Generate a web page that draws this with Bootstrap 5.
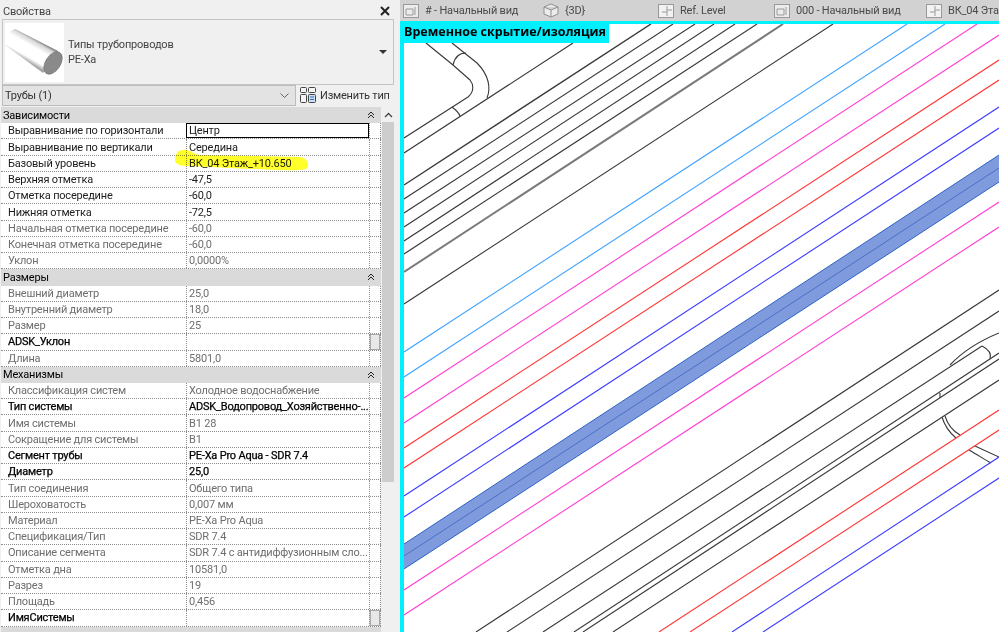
<!DOCTYPE html>
<html lang="ru">
<head>
  <meta charset="UTF-8" />
  <title>Свойства</title>
  <link rel="stylesheet" href="https://cdn.jsdelivr.net/npm/bootstrap@5.3.0/dist/css/bootstrap.min.css" />
  <style>
    html, body { height: 632px; overflow: hidden; }
    body { background: #f0f0f0; font-family: Roboto, "Liberation Sans", sans-serif; font-size: 11px; letter-spacing: -.2px; color: #000; line-height: 1; }

    /* левая панель */
    .props-panel { width: 398px; flex: none; height: 632px; overflow: hidden; padding-top: 3px; }
    .props-title { height: 16px; padding: 0 3px; color: #444; }
    .type-box { height: 66px; margin: 0 4px 0 2px; border: 1px solid #c4c4c4; padding: 2px; }
    .type-thumb { width: 59px; height: 59px; background: #fff; flex: none; }
    .type-text { color: #444; line-height: 15px; padding-left: 4px; }
    .filter-row { height: 22px; margin: 0 4px 0 2px; }
    .filter-combo { width: 294px; height: 21px; background: #e3e3e3; border: 1px solid #bcbcbc; padding: 0 2px; color: #333; flex: none; }
    .type-edit { color: #333; padding-left: 4px; gap: 4px; height: 20px; white-space: nowrap; }

    .props-wrap { height: 525px; padding-left: 1px; margin-right: 4px; }
    .props-grid { width: 380px; flex: none; background: #fff; }
    .group-row { height: 16.24px; background: #dadada; padding: 0 6px 0 2px; }
    .prop-row { height: 16.24px; border-bottom: 1px dotted #8c8c8c; }
    .prop-name { width: 185px; flex: none; padding-left: 7px; background: #fff; white-space: nowrap; color: #1c1c1c; }
    .prop-value { width: 183px; flex: none; padding-left: 2px; border-left: 1px dotted #8c8c8c; white-space: nowrap; overflow: hidden; color: #1c1c1c; }
    .prop-rest { flex: 1; border-left: 1px dotted #8c8c8c; border-right: 1px dotted #8c8c8c; }
    .prop-name, .prop-value { display: flex; align-items: center; height: 100%; }
    .prop-off .prop-name, .prop-off .prop-value { color: #6e6e6e; }
    .prop-strong .prop-name, .prop-strong .prop-value { color: #000; -webkit-text-stroke: .25px #000; }
    .prop-focus { outline: 1px solid #000; outline-offset: -1px; }
    .prop-thumb { background: #e8e8e8; box-shadow: inset 0 0 0 1px #a8a8a8; }

    .scroll-rail { width: 12px; flex: none; margin-left: 1px; }
    .scroll-head { height: 15px; }
    .scroll-handle { height: 360px; background: #cdcdcd; }

    .marker-layer { top: 0; left: 0; width: 398px; height: 180px; pointer-events: none; mix-blend-mode: multiply; }

    /* вид */
    .view-side { flex: 1; min-width: 0; padding-left: 2px; }
    .view-tabs { height: 21px; background: #d2d2d2; padding-left: 3px; color: #4a4a4a; white-space: nowrap; overflow: hidden; }
    .view-tab { flex: none; gap: 6px; }
    .view-tab:nth-child(1) { width: 140px; }
    .view-tab:nth-child(2) { width: 115px; }
    .view-tab:nth-child(3) { width: 116px; }
    .view-tab:nth-child(4) { width: 152px; }
    .view-canvas { height: 611px; border-top: 3px solid #00f0ff; border-left: 4px solid #00f0ff; background: #fff; }
    .view-canvas svg { display: block; }
    .isolate-label { top: 0; left: 0; background: #00f0ff; height: 19px; width: 205px; font-family: "Open Sans", sans-serif; font-weight: 700; font-size: 12.500px; letter-spacing: 0; color: #000; padding-bottom: 2px; white-space: nowrap; }
    .ln { fill: none; stroke-width: 1.100; }
    .ln-k { stroke: #383838; }
    .ln-b { stroke: #3ea2ff; }
    .ln-m { stroke: #ff3fd2; }
    .ln-r { stroke: #ff3535; }
    .ln-d { stroke: #3c3cff; }
  </style>
</head>
<body>

<div class="d-flex">
  <!-- Панель свойств -->
  <div class="props-panel position-relative">
    <div class="props-title d-flex justify-content-between align-items-center">
      <span>Свойства</span>
      <svg width="12" height="12" viewBox="0 0 12 12" class="me-1"><path d="M2 2l8 8M10 2l-8 8" stroke="#222" stroke-width="2" fill="none"/></svg>
    </div>

    <div class="type-box d-flex align-items-center">
      <div class="type-thumb">
        <svg width="59" height="59" viewBox="5 22 59 59">
          <defs>
            <linearGradient id="tube" gradientUnits="userSpaceOnUse" x1="36" y1="38" x2="24" y2="59">
              <stop offset="0" stop-color="#7c7c7c"/>
              <stop offset="0.12" stop-color="#d8d8d8"/>
              <stop offset="0.35" stop-color="#fff"/>
              <stop offset="0.8" stop-color="#fff"/>
              <stop offset="1" stop-color="#a4a4a4"/>
            </linearGradient>
          </defs>
          <path d="M15 28C9 30 3 37 5 44L43 72 58 50Z" fill="url(#tube)"/>
          <ellipse cx="53" cy="62" rx="7.500" ry="12.500" transform="rotate(33 53 62)" fill="#8a8a8a" stroke="#6c6c6c" stroke-width=".6"/>
        </svg>
      </div>
      <div class="type-text flex-grow-1">Типы трубопроводов<br />PE-Xa</div>
      <svg width="8" height="4" viewBox="0 0 8 4" class="me-1"><path d="M0 0h8L4 4z" fill="#333"/></svg>
    </div>

    <div class="filter-row d-flex align-items-start">
      <div class="filter-combo d-flex align-items-center justify-content-between">
        <span>Трубы (1)</span>
        <svg width="9" height="5" viewBox="0 0 9 5" class="me-1"><path d="M.5.5l4 4 4-4" stroke="#666" fill="none"/></svg>
      </div>
      <div class="type-edit d-flex align-items-center">
        <svg width="16" height="16" viewBox="0 0 16 16">
          <rect x=".5" y=".5" width="6" height="5" rx="1" fill="#f4f4f4" stroke="#444"/>
          <rect x="8.500" y=".5" width="7" height="5" rx="1" fill="#f4f4f4" stroke="#444"/>
          <rect x=".5" y="7.500" width="6" height="8" rx="1" fill="#f4f4f4" stroke="#444"/>
          <rect x="8.500" y="7.500" width="7" height="8" rx="1" fill="#cfe0f2" stroke="#444"/>
          <path d="M10 10h4M10 12.500h4" stroke="#2b6fb5"/>
        </svg>
        <span>Изменить тип</span>
      </div>
    </div>

    <div class="props-wrap d-flex">
      <div class="props-grid">
        <div class="group-row d-flex align-items-center justify-content-between"><span>Зависимости</span><svg width="8" height="8" viewBox="0 0 8 8"><path d="M1 4l3-3 3 3M1 7l3-3 3 3" stroke="#222" fill="none"/></svg></div>
        <div class="prop-row d-flex"><div class="prop-name">Выравнивание по горизонтали</div><div class="prop-value prop-focus">Центр</div><div class="prop-rest"></div></div>
        <div class="prop-row d-flex"><div class="prop-name">Выравнивание по вертикали</div><div class="prop-value">Середина</div><div class="prop-rest"></div></div>
        <div class="prop-row d-flex"><div class="prop-name">Базовый уровень</div><div class="prop-value">ВК_04 Этаж_+10.650</div><div class="prop-rest"></div></div>
        <div class="prop-row d-flex"><div class="prop-name">Верхняя отметка</div><div class="prop-value">-47,5</div><div class="prop-rest"></div></div>
        <div class="prop-row d-flex"><div class="prop-name">Отметка посередине</div><div class="prop-value">-60,0</div><div class="prop-rest"></div></div>
        <div class="prop-row d-flex"><div class="prop-name">Нижняя отметка</div><div class="prop-value">-72,5</div><div class="prop-rest"></div></div>
        <div class="prop-row prop-off d-flex"><div class="prop-name">Начальная отметка посередине</div><div class="prop-value">-60,0</div><div class="prop-rest"></div></div>
        <div class="prop-row prop-off d-flex"><div class="prop-name">Конечная отметка посередине</div><div class="prop-value">-60,0</div><div class="prop-rest"></div></div>
        <div class="prop-row prop-off d-flex"><div class="prop-name">Уклон</div><div class="prop-value">0,0000%</div><div class="prop-rest"></div></div>

        <div class="group-row d-flex align-items-center justify-content-between"><span>Размеры</span><svg width="8" height="8" viewBox="0 0 8 8"><path d="M1 4l3-3 3 3M1 7l3-3 3 3" stroke="#222" fill="none"/></svg></div>
        <div class="prop-row prop-off d-flex"><div class="prop-name">Внешний диаметр</div><div class="prop-value">25,0</div><div class="prop-rest"></div></div>
        <div class="prop-row prop-off d-flex"><div class="prop-name">Внутренний диаметр</div><div class="prop-value">18,0</div><div class="prop-rest"></div></div>
        <div class="prop-row prop-off d-flex"><div class="prop-name">Размер</div><div class="prop-value">25</div><div class="prop-rest"></div></div>
        <div class="prop-row prop-strong d-flex"><div class="prop-name">ADSK_Уклон</div><div class="prop-value"></div><div class="prop-rest prop-thumb"></div></div>
        <div class="prop-row prop-off d-flex"><div class="prop-name">Длина</div><div class="prop-value">5801,0</div><div class="prop-rest"></div></div>

        <div class="group-row d-flex align-items-center justify-content-between"><span>Механизмы</span><svg width="8" height="8" viewBox="0 0 8 8"><path d="M1 4l3-3 3 3M1 7l3-3 3 3" stroke="#222" fill="none"/></svg></div>
        <div class="prop-row prop-off d-flex"><div class="prop-name">Классификация систем</div><div class="prop-value">Холодное водоснабжение</div><div class="prop-rest"></div></div>
        <div class="prop-row prop-strong d-flex"><div class="prop-name">Тип системы</div><div class="prop-value">ADSK_Водопровод_Хозяйственно-...</div><div class="prop-rest"></div></div>
        <div class="prop-row prop-off d-flex"><div class="prop-name">Имя системы</div><div class="prop-value">В1 28</div><div class="prop-rest"></div></div>
        <div class="prop-row prop-off d-flex"><div class="prop-name">Сокращение для системы</div><div class="prop-value">В1</div><div class="prop-rest"></div></div>
        <div class="prop-row prop-strong d-flex"><div class="prop-name">Сегмент трубы</div><div class="prop-value">PE-Xa Pro Aqua - SDR 7.4</div><div class="prop-rest"></div></div>
        <div class="prop-row prop-strong d-flex"><div class="prop-name">Диаметр</div><div class="prop-value">25,0</div><div class="prop-rest"></div></div>
        <div class="prop-row prop-off d-flex"><div class="prop-name">Тип соединения</div><div class="prop-value">Общего типа</div><div class="prop-rest"></div></div>
        <div class="prop-row prop-off d-flex"><div class="prop-name">Шероховатость</div><div class="prop-value">0,007 мм</div><div class="prop-rest"></div></div>
        <div class="prop-row prop-off d-flex"><div class="prop-name">Материал</div><div class="prop-value">PE-Xa Pro Aqua</div><div class="prop-rest"></div></div>
        <div class="prop-row prop-off d-flex"><div class="prop-name">Спецификация/Тип</div><div class="prop-value">SDR 7.4</div><div class="prop-rest"></div></div>
        <div class="prop-row prop-off d-flex"><div class="prop-name">Описание сегмента</div><div class="prop-value">SDR 7.4 с антидиффузионным сло...</div><div class="prop-rest"></div></div>
        <div class="prop-row prop-off d-flex"><div class="prop-name">Отметка дна</div><div class="prop-value">10581,0</div><div class="prop-rest"></div></div>
        <div class="prop-row prop-off d-flex"><div class="prop-name">Разрез</div><div class="prop-value">19</div><div class="prop-rest"></div></div>
        <div class="prop-row prop-off d-flex"><div class="prop-name">Площадь</div><div class="prop-value">0,456</div><div class="prop-rest"></div></div>
        <div class="prop-row prop-strong d-flex"><div class="prop-name">ИмяСистемы</div><div class="prop-value"></div><div class="prop-rest prop-thumb"></div></div>
        <div class="group-row"></div>
      </div>
      <div class="scroll-rail">
        <div class="scroll-head d-flex align-items-center justify-content-center">
          <svg width="9" height="6" viewBox="0 0 9 6"><path d="M1 5l3.500-3.500L8 5" stroke="#444" stroke-width="1.300" fill="none"/></svg>
        </div>
        <div class="scroll-handle"></div>
      </div>
    </div>

    <!-- маркер поверх строки "Базовый уровень" -->
    <svg class="marker-layer position-absolute" viewBox="0 0 398 180">
      <path d="M175 160C175 152 180 149 187 150C192 151 195 155 200 155L300 157C308 158 310 166 306 169C290 172 270 169 250 169L190 166C182 166 175 165 175 160Z" fill="#ffff2a"/>
    </svg>
  </div>

  <!-- Вид -->
  <div class="view-side">
    <div class="view-tabs d-flex align-items-center">
      <div class="view-tab d-flex align-items-center">
        <svg width="16" height="14" viewBox="0 0 16 14"><rect x=".5" y=".5" width="15" height="13" fill="#ececec" stroke="#9a9a9a"/><path d="M3 5h7v6H3zM12 3v8" stroke="#9a9a9a" fill="none"/></svg>
        <span># - Начальный вид</span>
      </div>
      <div class="view-tab d-flex align-items-center">
        <svg width="16" height="15" viewBox="0 0 16 15"><path d="M8 1l7 3v7l-7 3-7-3V4zM1 4l7 3 7-3M8 7v7" fill="#ececec" stroke="#8f8f8f"/></svg>
        <span>{3D}</span>
      </div>
      <div class="view-tab d-flex align-items-center">
        <svg width="16" height="14" viewBox="0 0 16 14"><rect x=".5" y=".5" width="15" height="13" fill="#f2f2f2" stroke="#9a9a9a"/><path d="M9 2v4h5M9 6v6M4 8h5" stroke="#9a9a9a" fill="none"/></svg>
        <span>Ref. Level</span>
      </div>
      <div class="view-tab d-flex align-items-center">
        <svg width="16" height="14" viewBox="0 0 16 14"><rect x=".5" y=".5" width="15" height="13" fill="#ececec" stroke="#9a9a9a"/><path d="M3 5h7v6H3zM12 3v8" stroke="#9a9a9a" fill="none"/></svg>
        <span>000 - Начальный вид</span>
      </div>
      <div class="view-tab d-flex align-items-center">
        <svg width="16" height="14" viewBox="0 0 16 14"><rect x=".5" y=".5" width="15" height="13" fill="#f2f2f2" stroke="#9a9a9a"/><path d="M9 2v4h5M9 6v6M4 8h5" stroke="#9a9a9a" fill="none"/></svg>
        <span>ВК_04 Этаж</span>
      </div>
    </div>

    <div class="view-canvas position-relative">
      <svg width="597" height="608" viewBox="404 24 597 608">
        <!-- верхние чёрные трубы с отводом -->
        <g class="ln ln-k">
          <path d="M426 43L453 65L470 80C474 85 474 92 468 97L404 138"/>
          <path d="M452 43L477 63C489 75 491 88 487 98"/>
          <path d="M453 65C455 56 460 53 466 53"/>
          <path d="M452 107C456 110 459 113 460 116"/>
          <path d="M404 153L573 43"/>
          <path d="M404 185L651 24" stroke-width="1.400"/>
          <path d="M404 199L673 24"/>
          <path d="M404 213L695 24"/>
          <path d="M404 227L714 24"/>
          <path d="M404 241L735 24"/>
          <path d="M404 254L757 24"/>
          <path d="M404 272L783 24" stroke="#7a7a7a" stroke-width="2"/>
          <path d="M404 304L833 24"/>
        </g>
        <path class="ln ln-b" d="M404 352L907 24"/>
        <path class="ln ln-b" d="M404 377L945 24"/>
        <path class="ln ln-m" d="M404 398L977 24"/>
        <path class="ln ln-m" d="M404 423L999 35"/>
        <path class="ln ln-r" d="M404 448L999 60"/>
        <path class="ln ln-r" d="M404 468L999 80"/>
        <path class="ln ln-d" d="M404 496L999 107"/>
        <path class="ln ln-d" d="M404 517L999 128"/>
        <!-- выбранная труба -->
        <path d="M404 544L999 155V182L404 569Z" fill="#7f9bdd"/>
        <path d="M404 544L999 155M404 569L999 182" stroke="#2c62c4" fill="none"/>
        <path d="M404 556L999 168" stroke="#4a6fc4" fill="none"/>
        <path class="ln ln-m" d="M404 590L999 202"/>
        <path class="ln ln-m" d="M404 615L999 227"/>
        <!-- нижние трубы -->
        <g class="ln ln-k">
          <path d="M476 632L999 290"/>
          <path d="M507 632L999 311"/>
          <path d="M543 632L982 346"/>
          <path d="M950 365C964 350 982 340 999 333"/>
          <path d="M982 346C988 349 992 353 990 359"/>
          <path d="M574 632L999 353"/>
          <path d="M583 632L999 359"/>
          <path d="M613 632L999 380"/>
          <path d="M940 393V398"/>
          <path d="M942 417C945 427 950 433 956 438"/>
          <path d="M945 416C948 426 953 431 960 435"/>
          <path d="M969 450C978 455 985 460 991 463"/>
          <path d="M975 446L999 457"/>
        </g>
        <path class="ln ln-r" d="M659 632L999 410"/>
        <path class="ln ln-r" d="M690 632L999 430"/>
        <path class="ln ln-d" d="M732 632L999 457"/>
        <path class="ln ln-d" d="M763 632L999 478"/>
      </svg>
      <div class="isolate-label position-absolute d-flex align-items-center">Временное скрытие/изоляция</div>
    </div>
  </div>
</div>

<script src="https://cdn.jsdelivr.net/npm/bootstrap@5.3.0/dist/js/bootstrap.bundle.min.js"></script>
</body>
</html>
